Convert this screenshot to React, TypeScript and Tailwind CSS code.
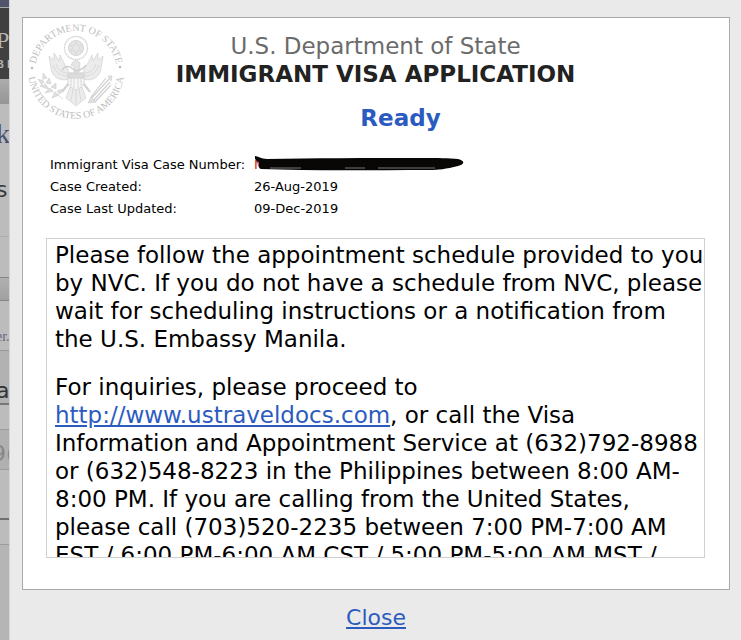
import type { ReactNode } from "react";

const Seal = () => (
  <svg viewBox="0 0 100 100" className="h-[100px] w-[100px] shrink-0" role="img" aria-label="Department of State seal">
    <defs>
      <path id="arc-top" d="M 9 50 A 41 41 0 0 1 91 50" />
      <path id="arc-bottom" d="M 2.5 42 A 48 48 0 1 0 97.5 42" />
    </defs>
    <g fill="#bdbdbd" fontFamily="Liberation Serif, serif" textAnchor="middle">
      <text fontSize="10">
        <textPath href="#arc-top" startOffset="50%">DEPARTMENT OF STATE</textPath>
      </text>
      <text fontSize="10">
        <textPath href="#arc-bottom" startOffset="50%">UNITED STATES OF AMERICA</textPath>
      </text>
      <circle cx="6" cy="46" r="1.3" />
      <circle cx="94" cy="45" r="1.3" />
    </g>
    {/* Crest */}
    <g fill="none" stroke="#d2d2d2">
      <circle cx="50" cy="26" r="11.5" strokeWidth="1.4" strokeDasharray="1.4 0.6" />
      <circle cx="50" cy="26" r="7.5" fill="#e6e6e6" />
      <path d="M50 20l1.6 3.4 3.7-.4-2.1 3 2.1 3-3.7-.4L50 32l-1.6-3.4-3.7.4 2.1-3-2.1-3 3.7.4z" strokeWidth="0.7" />
    </g>
    {/* Wings and legs */}
    <g fill="#ececec" stroke="#d4d4d4" strokeWidth="0.8">
      <path d="M43 57 C34 60 26 55 25 46 L23 34 L28 38 L28 31 L33 39 L34 33 L39 43 L42 47z" />
      <path d="M57 57 C66 60 74 55 75 46 L77 34 L72 38 L72 31 L67 39 L66 33 L61 43 L58 47z" />
      <path d="M27 43c2 7 6 10 14 11M30 42c2 6 5 8 11 9M73 43c-2 7-6 10-14 11M70 42c-2 6-5 8-11 9" fill="none" />
      <path d="M43 61 L36 70 M57 61 L64 70" fill="none" strokeWidth="2.2" />
      <path d="M44 65 L56 65 L60 76 L55 80 L50 84 L45 80 L40 76z" />
      <path d="M47 67l-2 12M50 67v15M53 67l2 12" fill="none" />
    </g>
    {/* Shield, head and scroll */}
    <g stroke="#d0d0d0" strokeWidth="0.8">
      <path d="M42 51h16v9c0 4-4 6-8 8-4-2-8-4-8-8z" fill="#f7f7f7" />
      <path d="M42 51h16v5H42z" fill="#dcdcdc" />
      <path d="M45 56v8M48 56v10M52 56v10M55 56v8" fill="none" />
      <path d="M48 50v-6l-3-1 2-3c3-3 7-1 7 2l-1 8z" fill="#e6e6e6" />
      <path d="M36 48c4-6 9-3 11-1s7 3 13-4" fill="none" strokeWidth="1.6" />
    </g>
    {/* Olive branch and arrows */}
    <g fill="#e0e0e0" stroke="#d0d0d0" strokeWidth="0.7">
      <path d="M16 57 C20 67 28 70 37 77" fill="none" />
      <path d="M17 59l-5-2 4 6zM20 63l-6 1 8 3zM24 66l-5 5 8-2zM29 70l-3 6 7-3zM20 61l3-5 2 6zM25 65l5-4 0 6zM31 69l6-2-3 5zM17 57l0-6 4 5z" />
      <path d="M64 78L83 57M67 79L84 60M69 80L85 63M65 75l15-19" fill="none" strokeWidth="1.2" />
      <path d="M82 54l4 0-1 5zM65 75l-3 6 8-1z" />
    </g>
  </svg>
);

// Black marker over the case number
const Redaction = () => (
  <svg viewBox="0 0 212 18" className="absolute -left-px top-0 h-[18px] w-[212px]" aria-hidden="true">
    <path
      d="M2 2 C5 2 8 5 14 5 C60 4 110 4 170 4 C184 4 196 4 205 5 C213 7 211 11 205 12 C193 15 185 16 177 16 C120 16 60 17 8 15 C5 14 6 11 6 9 L2 5z"
      fill="#090606"
    />
    <path d="M17 14 H48 M92 14 H112 M125 14 H182" stroke="#777" strokeWidth="1" fill="none" />
  </svg>
);

const details: { label: string; value: ReactNode }[] = [
  {
    label: "Immigrant Visa Case Number:",
    value: (
      <span className="relative inline-block">
        <span className="text-[#c5281c]">MNL</span>
        <Redaction />
      </span>
    ),
  },
  { label: "Case Created:", value: "26-Aug-2019" },
  { label: "Case Last Updated:", value: "09-Dec-2019" },
];

// Edge of the dimmed page that stays visible beside the dialog
const PageEdge = () => (
  <div className="flex w-[10px] shrink-0 flex-col overflow-hidden border-r border-[#d4d4d4] bg-[#bcbcbc] whitespace-nowrap" aria-hidden="true">
    <div className="h-2 border-b border-[#aaa] bg-[#50546c]" />
    <div className="h-[71px] bg-[#404040] pt-4 font-['Liberation_Serif',serif] text-[24px] leading-8 text-[#b5b5b5]">
      <div className="-ml-1">P</div>
      <div className="-ml-1 font-['Liberation_Sans',sans-serif] text-[11px] leading-4 font-bold">B I</div>
    </div>
    <div className="h-[25px] bg-linear-to-b from-[#adadad] to-[#959595]" />
    <div className="h-[133px] border-b border-[#adadad] pt-[14px]">
      <div className="-ml-1 font-['Liberation_Serif',serif] text-[28px] leading-8 text-[#4b5270]">k</div>
      <div className="-ml-1 pt-6 text-[22px] leading-8 text-[#383838]">s</div>
    </div>
    <div className="h-10" />
    <div className="h-6 border-y border-[#858585] bg-linear-to-b from-[#b0b0b0] to-[#a0a0a0]" />
    <div className="h-[50px] border-b border-[#999] pt-6 font-['Liberation_Serif',serif] text-[14px] leading-6 text-[#65657f]">
      <div className="-ml-1">er.</div>
    </div>
    <div className="h-[54px] border-b-2 border-[#777] bg-[#b2b2b2] pt-5">
      <div className="-ml-1 text-[22px] leading-10 text-[#333]">a</div>
    </div>
    <div className="h-6" />
    <div className="h-[41px] border-y border-[#9c9c9c] bg-[#b0b0b0] pt-2">
      <div className="-ml-2 text-[22px] leading-8 text-[#878787]">9(</div>
    </div>
    <div className="h-[50px] border-b-2 border-[#6f6f6f]" />
    <div className="h-[25px] border-b border-[#9c9c9c]" />
    <div className="flex-1 bg-[#b5b5b5]" />
  </div>
);

export default function App() {
  return (
    <div className="flex min-h-screen bg-[#eaeaea] font-['DejaVu_Sans',Verdana,sans-serif] text-black">
      <PageEdge />

      <main className="flex min-w-0 flex-1 flex-col items-center pt-[17px] pr-[11px] pl-3">
        <section className="w-full border border-[#a9a9a9] bg-white pr-6 pb-[31px] pl-[23px]">
          <header className="-mx-5 flex pt-1">
            <Seal />
            <div className="flex-1 pt-[10px] pr-[100px] text-center">
              <p className="text-[23px] leading-7 text-[#6b6b6b]">U.S. Department of State</p>
              <h1 className="text-[23px] leading-7 font-bold text-[#222]">IMMIGRANT VISA APPLICATION</h1>
              <p className="pt-4 pl-[50px] text-[23px] leading-7 font-bold text-[#2c5bc0]">Ready</p>
            </div>
          </header>

          <table className="mt-[22px] ml-1 text-left text-[13px] leading-[22px]">
            <tbody>
              {details.map((row) => (
                <tr key={row.label}>
                  <th scope="row" className="w-[204px] font-normal whitespace-nowrap">
                    {row.label}
                  </th>
                  <td>{row.value}</td>
                </tr>
              ))}
            </tbody>
          </table>

          {/* Status message */}
          <div className="mt-[18px] h-80 overflow-hidden border border-[#d0d0d0] pt-[2px] pl-2 text-[23px] leading-7 whitespace-nowrap">
            <p>
              Please follow the appointment schedule provided to you
              <br />
              by NVC. If you do not have a schedule from NVC, please
              <br />
              wait for scheduling instructions or a notification from
              <br />
              the U.S. Embassy Manila.
            </p>
            <p className="mt-5">
              For inquiries, please proceed to
              <br />
              <a href="http://www.ustraveldocs.com" className="text-[#2c5bc0] underline">
                http://www.ustraveldocs.com
              </a>
              , or call the Visa
              <br />
              Information and Appointment Service at (632)792-8988
              <br />
              or (632)548-8223 in the Philippines between 8:00 AM-
              <br />
              8:00 PM. If you are calling from the United States,
              <br />
              please call (703)520-2235 between 7:00 PM-7:00 AM
              <br />
              EST / 6:00 PM-6:00 AM CST / 5:00 PM-5:00 AM MST /
            </p>
          </div>
        </section>

        <button type="button" className="mt-3 cursor-pointer text-[22px] leading-8 text-[#2c5bc0] underline">
          Close
        </button>
      </main>
    </div>
  );
}
